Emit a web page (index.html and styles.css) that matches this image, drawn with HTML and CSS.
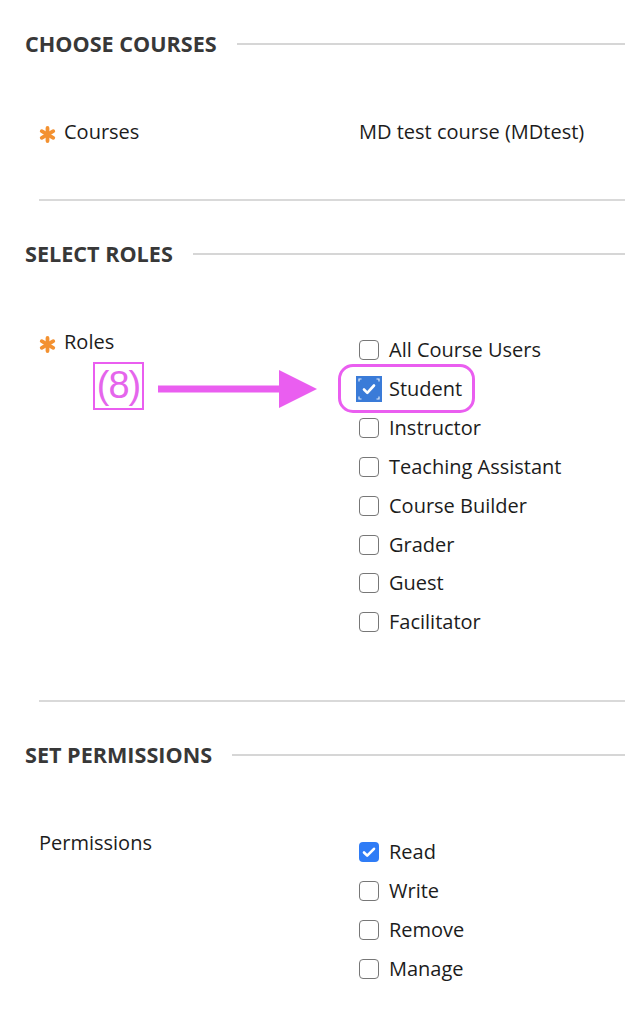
FILE: index.html
```html
<!DOCTYPE html>
<html lang="en">
<head>
<meta charset="utf-8">
<title>Roles and permissions</title>
<link rel="stylesheet" href="styles.css">
</head>
<body>
<main class="page">
  <section class="section">
    <div class="section-head"><h2>CHOOSE COURSES</h2><span class="rule"></span></div>
    <div class="field field-courses">
      <div class="label"><svg class="req" viewBox="0 0 18 18" aria-hidden="true"><g stroke="#f39131" stroke-width="4" stroke-linecap="round"><line x1="9" y1="2" x2="9" y2="16"/><line x1="2.9" y1="5.5" x2="15.1" y2="12.5"/><line x1="2.9" y1="12.5" x2="15.1" y2="5.5"/></g></svg><span>Courses</span></div>
      <div class="value">MD test course (MDtest)</div>
    </div>
  </section>
  <div class="divider divider-1"></div>

  <section class="section">
    <div class="section-head"><h2>SELECT ROLES</h2><span class="rule"></span></div>
    <div class="field field-roles">
      <div class="label"><svg class="req" viewBox="0 0 18 18" aria-hidden="true"><g stroke="#f39131" stroke-width="4" stroke-linecap="round"><line x1="9" y1="2" x2="9" y2="16"/><line x1="2.9" y1="5.5" x2="15.1" y2="12.5"/><line x1="2.9" y1="12.5" x2="15.1" y2="5.5"/></g></svg><span>Roles</span></div>
      <ul class="checks">
        <li><span class="box"></span>All Course Users</li>
        <li class="hl"><span class="box focus"><svg viewBox="0 0 26 26" aria-hidden="true"><rect width="26" height="26" fill="#3a7bd8"/><g stroke="#fff" stroke-width="1.2" fill="none" opacity="0.85"><path d="M3 5.5V3H5.5"/><path d="M20.5 3H23V5.5"/><path d="M3 20.5V23H5.5"/><path d="M20.5 23H23V20.5"/></g><path d="M8 13.5l3.3 3.3L18 9.5" stroke="#fff" stroke-width="2.6" fill="none" stroke-linecap="round" stroke-linejoin="round"/></svg></span>Student</li>
        <li><span class="box"></span>Instructor</li>
        <li><span class="box"></span>Teaching Assistant</li>
        <li><span class="box"></span>Course Builder</li>
        <li><span class="box"></span>Grader</li>
        <li><span class="box"></span>Guest</li>
        <li><span class="box"></span>Facilitator</li>
      </ul>
      <div class="callout">(8)</div>
      <svg class="arrow" viewBox="0 0 160 40" aria-hidden="true"><rect x="0" y="16.5" width="124" height="7" fill="#ea5ef0"/><polygon points="121,1 159,20 121,39" fill="#ea5ef0"/></svg>
    </div>
  </section>
  <div class="divider divider-2"></div>

  <section class="section">
    <div class="section-head"><h2>SET PERMISSIONS</h2><span class="rule"></span></div>
    <div class="field field-perms">
      <div class="label plain"><span>Permissions</span></div>
      <ul class="checks">
        <li><span class="box checked"><svg viewBox="0 0 20 20" aria-hidden="true"><path d="M5 10.5l3.2 3.2L15 6.8" stroke="#fff" stroke-width="2.6" fill="none" stroke-linecap="round" stroke-linejoin="round"/></svg></span>Read</li>
        <li><span class="box"></span>Write</li>
        <li><span class="box"></span>Remove</li>
        <li><span class="box"></span>Manage</li>
      </ul>
    </div>
  </section>
</main>
</body>
</html>
```

FILE: styles.css
```css
html, body {
  margin: 0;
  padding: 0;
  background: #ffffff;
}

body {
  font-family: "Open Sans", "Noto Sans", sans-serif;
  font-size: 20px;
  color: #1c1c1c;
}

.page {
  padding-top: 24px;
}

.section-head {
  display: flex;
  align-items: center;
  gap: 20px;
  height: 40px;
  padding-left: 25px;
}

.section-head h2 {
  margin: 0;
  font-size: 21.6px;
  font-weight: 700;
  color: #383838;
  line-height: 40px;
  white-space: nowrap;
}

.rule {
  flex: 1;
  height: 2px;
  background: #d6d6d6;
}

.field {
  position: relative;
  display: grid;
  grid-template-columns: 320px 1fr;
  padding-left: 39px;
  margin-top: 55px;
  line-height: 26px;
}

.label {
  display: flex;
  align-items: center;
  gap: 8px;
  height: 26px;
}

.req {
  width: 17px;
  height: 17px;
  margin-top: 4px;
  flex: none;
}

.value {
  height: 26px;
}

.divider {
  height: 2px;
  margin-left: 39px;
  background: #d9d9d9;
}

.divider-1 {
  margin-top: 54px;
  margin-bottom: 33px;
}

.divider-2 {
  margin-top: 58px;
  margin-bottom: 33px;
}

.checks {
  list-style: none;
  margin: 0;
  padding: 2px 0 0 0;
}

.field-perms .checks {
  padding-top: 3px;
}

.checks li {
  display: flex;
  align-items: center;
  gap: 10px;
  height: 38.85px;
  position: relative;
  width: max-content;
}

.box {
  position: relative;
  width: 20px;
  height: 20px;
  box-sizing: border-box;
  border: 1.5px solid #777777;
  border-radius: 4px;
  flex: none;
}

.box.checked {
  border: none;
  background: #2f7cf6;
}

.box svg {
  display: block;
  width: 20px;
  height: 20px;
}

.box.focus {
  border: none;
  border-radius: 0;
}

.box.focus svg {
  position: absolute;
  left: -3px;
  top: -3px;
  width: 26px;
  height: 26px;
}

.hl::after {
  content: "";
  position: absolute;
  left: -21px;
  top: -6px;
  width: 137px;
  height: 49px;
  box-sizing: border-box;
  border: 3px solid #ea5ef0;
  border-radius: 15px;
}

.callout {
  position: absolute;
  left: 93px;
  top: 33px;
  width: 51px;
  height: 48px;
  box-sizing: border-box;
  border: 2.5px solid #ea5ef0;
  color: #e565ec;
  font-family: "Liberation Sans", Arial, sans-serif;
  font-size: 38px;
  line-height: 43px;
  text-align: center;
  letter-spacing: -1px;
}

.arrow {
  position: absolute;
  left: 158px;
  top: 40px;
  width: 160px;
  height: 40px;
}
```
